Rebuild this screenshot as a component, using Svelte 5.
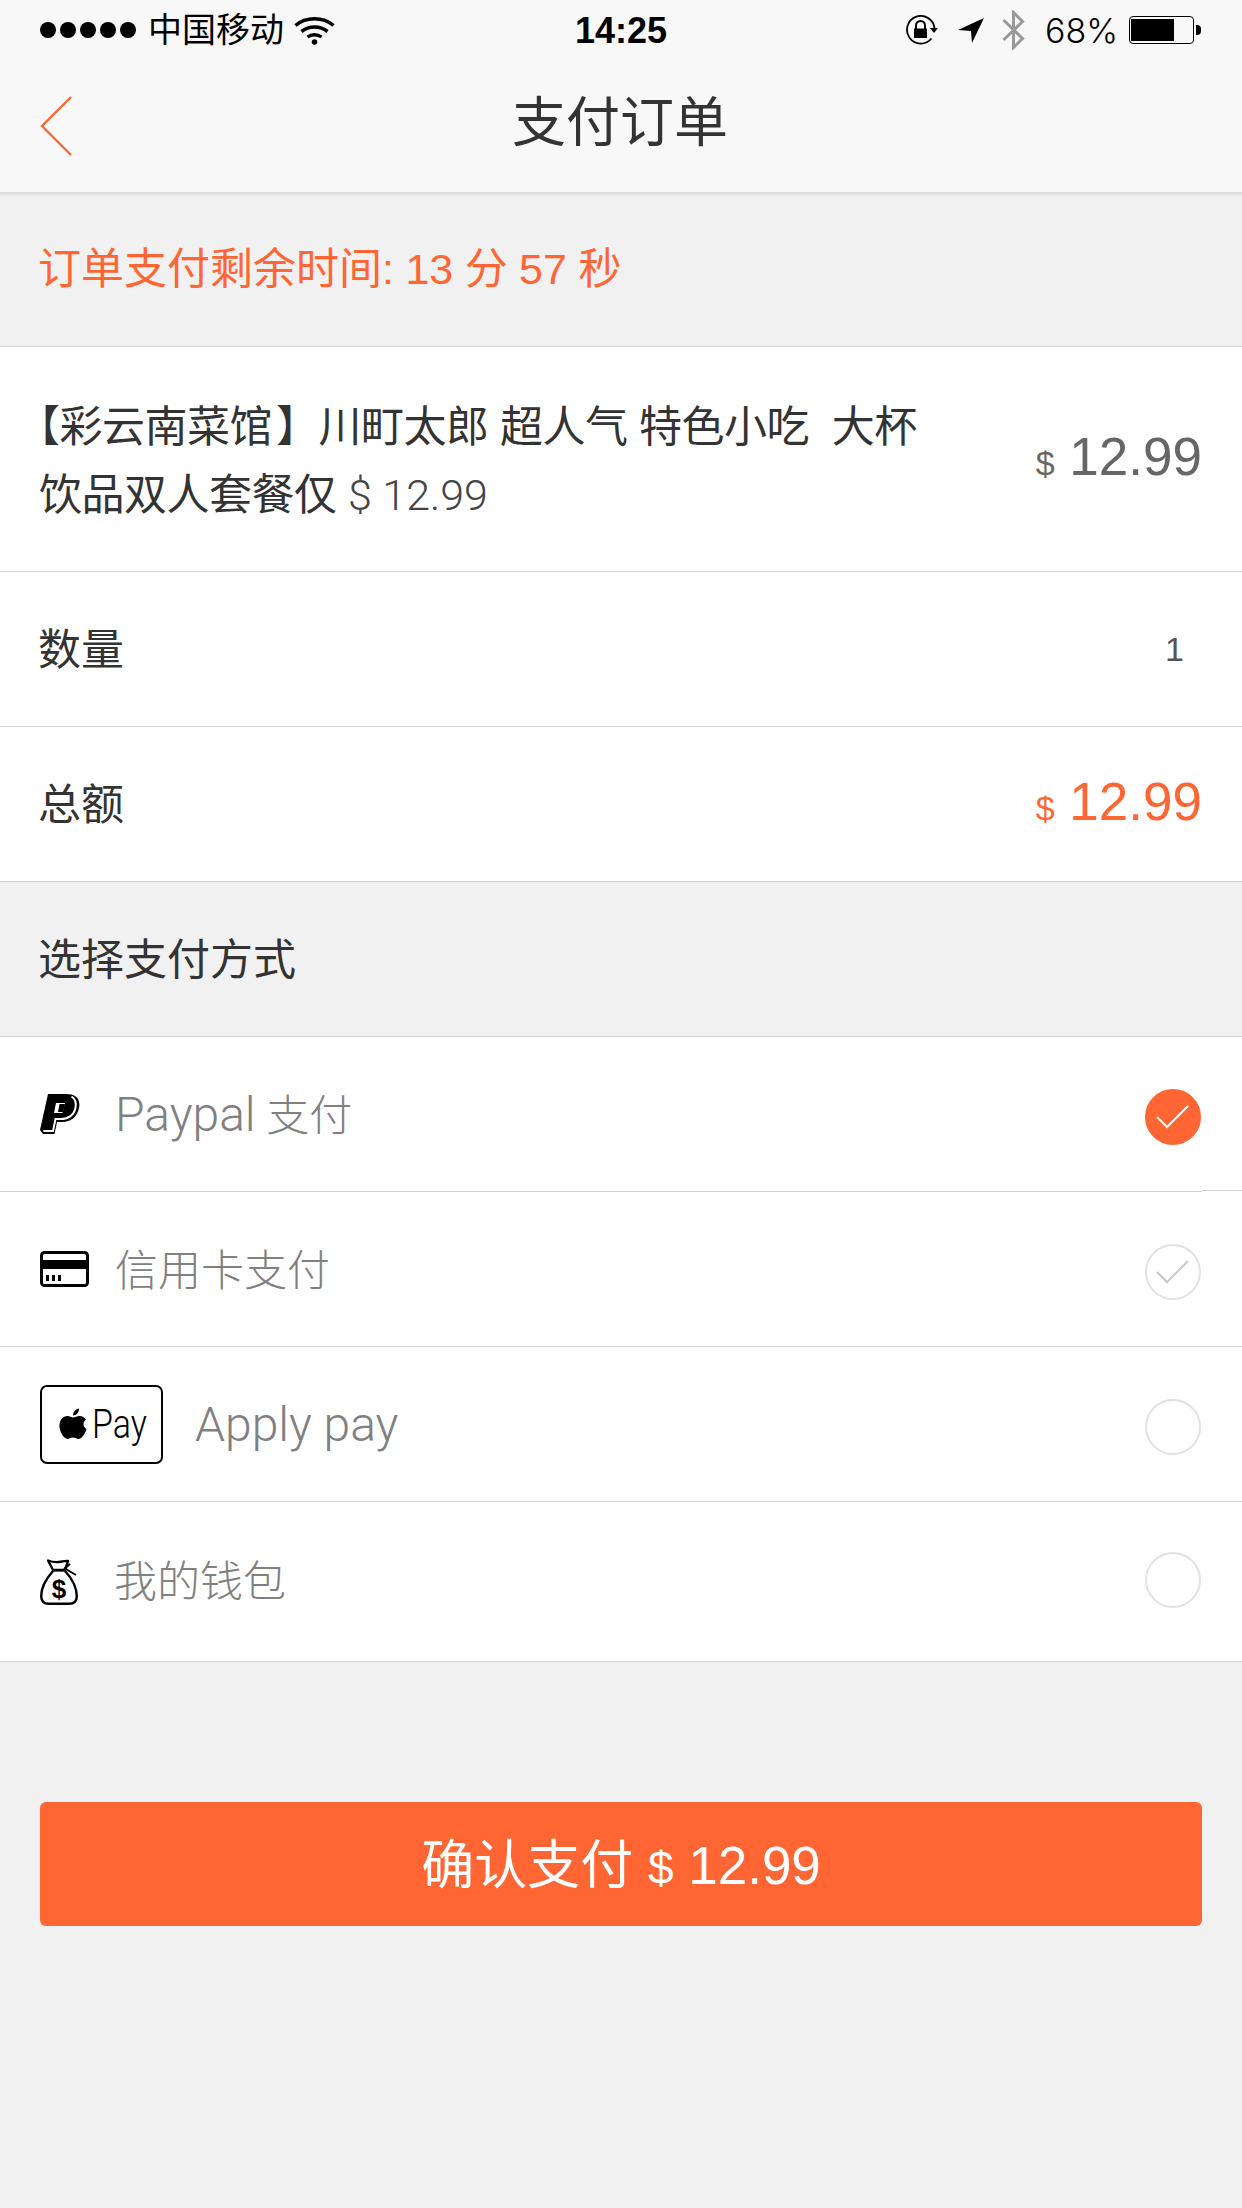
<script>
    const dots = [0, 1, 2, 3, 4];
    const orange = '#ff6633';
</script>

<div class="page">
    <header class="top">
        <div class="status">
            <div class="status-left">
                <div class="dots">
                    {#each dots as d}
                        <span class="dot"></span>
                    {/each}
                </div>
                <span class="carrier">中国移动</span>
                <svg class="wifi" width="41" height="29" viewBox="0 0 41 29">
                    <path d="M1.500 9.500C12 0.500 29 0.500 39.500 9.500" fill="none" stroke="#000" stroke-width="3.6"/>
                    <path d="M7.500 15.500C15 9.500 26 9.500 33.500 15.500" fill="none" stroke="#000" stroke-width="3.6"/>
                    <path d="M13.500 21C17.500 18 23.500 18 27.500 21" fill="none" stroke="#000" stroke-width="3.4"/>
                    <circle cx="20.500" cy="26" r="2.800" fill="#000"/>
                </svg>
            </div>
            <div class="time">14:25</div>
            <div class="status-right">
                <svg width="33" height="30" viewBox="0 0 33 30">
                    <path d="M26.500 23.500A13.800 13.800 0 1 1 29.500 13" fill="none" stroke="#000" stroke-width="1.800"/>
                    <path d="M25 13H33L29 18Z" fill="#000"/>
                    <path d="M11 14V10.500a4.500 4.500 0 0 1 9 0V14" fill="none" stroke="#000" stroke-width="2"/>
                    <rect x="9" y="13.500" width="13" height="9.500" fill="#000"/>
                </svg>
                <svg class="arrow" width="26" height="26" viewBox="0 0 26 26">
                    <path d="M0 13L26 1L14 26L13 14Z" fill="#000"/>
                </svg>
                <svg class="bt" width="23" height="40" viewBox="0 0 23 40">
                    <path d="M1.500 10L20.500 28.500L11.500 37.500V2.500L20.500 11.500L1.500 30" fill="none" stroke="#999" stroke-width="3"/>
                </svg>
                <span class="pct">68%</span>
                <div class="battery"><div class="level"></div></div>
                <span class="nub"></span>
            </div>
        </div>
        <nav class="nav">
            <svg class="back" width="32" height="60" viewBox="0 0 32 60">
                <path d="M31 1L2 30L31 59" fill="none" stroke={orange} stroke-width="2.400"/>
            </svg>
            <h1>支付订单</h1>
        </nav>
    </header>

    <div class="band timer">订单支付剩余时间: 13 分 57 秒</div>

    <section class="item">
        <p class="item-name">【彩云南菜馆<span class="gap"></span>】川町太郎 超人气 特色小吃&nbsp; 大杯<br/><span class="indent">饮品双人套餐仅 <small>$ 12.99</small></span></p>
        <div class="price"><small>$</small> 12.99</div>
    </section>
    <div class="row">
        <span>数量</span>
        <span class="count">1</span>
    </div>
    <div class="row">
        <span>总额</span>
        <div class="price total"><small>$</small> 12.99</div>
    </div>

    <div class="band method-title">选择支付方式</div>

    <div class="pay paypal">
        <div class="pay-left">
            <svg width="40" height="40" viewBox="0 0 40 40">
                <path d="M0 36L8 0H26C35 0 41 4 39 14C37 23 31 28 22 28H17L14.500 40H3Z" fill="#000"/>
                <path d="M31.500 2.500C35.500 5 36.500 9 35.500 14C34 21 28.500 25 21 25H15.500L13 37H3.500" fill="none" stroke="#fff" stroke-width="2"/>
                <path d="M16 9H25L22.500 19H14Z" fill="#fff"/>
                <path d="M19.500 10H25L23 18H18Z" fill="#000"/>
            </svg>
            <span><span class="big">Paypal</span> 支付</span>
        </div>
        <span class="check on">
            <svg width="34" height="24" viewBox="0 0 34 24"><path d="M1 12L11 22L32 1" fill="none" stroke="#fff" stroke-width="2"/></svg>
        </span>
    </div>
    <div class="pay credit">
        <div class="pay-left">
            <svg width="49" height="36" viewBox="0 0 49 36">
                <rect x="1.500" y="1.500" width="46" height="33" rx="3" fill="none" stroke="#000" stroke-width="3"/>
                <rect x="1" y="9" width="47" height="9" fill="#000"/>
                <rect x="6" y="24" width="3" height="6" fill="#000"/>
                <rect x="12" y="24" width="3" height="6" fill="#000"/>
                <rect x="18" y="24" width="3" height="6" fill="#000"/>
            </svg>
            <span>信用卡支付</span>
        </div>
        <span class="check">
            <svg width="34" height="24" viewBox="0 0 34 24"><path d="M1 12L11 22L32 1" fill="none" stroke="#c8c8c8" stroke-width="2"/></svg>
        </span>
    </div>
    <div class="pay">
        <div class="pay-left wide">
            <div class="apple-box">
                <svg width="28" height="34" viewBox="0 0 30 34">
                    <path d="M15 10C17 10 19 8.500 22 8.500C25 8.500 27.500 10 29 12.500C25.500 14.500 25 19.500 29.500 22.500C28 27 24.500 33 21 33C19 33 18 31.500 15 31.500C12 31.500 11 33 9 33C5 33 0.500 25 0.500 19C0.500 12.500 4.500 8.500 9 8.500C11.500 8.500 13.500 10 15 10Z" fill="#000"/>
                    <path d="M15 8C15 4 18 1 21.500 0.500C21.700 4.500 18.500 8 15 8Z" fill="#000"/>
                </svg>
                <span class="apple-pay">Pay</span>
            </div>
            <span class="big">Apply pay</span>
        </div>
        <span class="check"></span>
    </div>
    <div class="pay wallet">
        <div class="pay-left">
            <svg width="38" height="46" viewBox="0 0 38 46">
                <path d="M8 1.500C12 3 15 3.500 19 3C23 2.500 26 1.500 28 2L25 11H13Z" fill="none" stroke="#000" stroke-width="2.400" stroke-linejoin="round"/>
                <path d="M13 12C5 21 1.200 30 1.200 37C1.200 42.500 4 44.800 9 44.800H29C34 44.800 36.800 42.500 36.800 37C36.800 30 33 20 25 12" fill="none" stroke="#000" stroke-width="2.400"/>
                <path d="M12 11.500H26M24 9L36 16M24 10L30 5" fill="none" stroke="#000" stroke-width="2"/>
                <text x="19" y="39" class="bag-dollar">$</text>
            </svg>
            <span>我的钱包</span>
        </div>
        <span class="check"></span>
    </div>

    <div class="footer">
        <button class="confirm">确认支付 <small>$</small> 12.99</button>
    </div>
</div>

<style>
    :global(body) {
        margin: 0;
        background: #f1f1f1;
    }

    .page {
        width: 1242px;
        height: 2208px;
        overflow: hidden;
        background: #f1f1f1;
        font-family: "Liberation Sans", "Noto Sans CJK SC", sans-serif;
        color: #333;
    }

    .top {
        height: 196px;
        background: linear-gradient(#f8f8f8 192px, #d9d9d9 192px, #ececec 196px);
    }

    .status {
        height: 60px;
        display: grid;
        grid-template-columns: 1fr auto 1fr;
        align-items: center;
        padding: 0 40px;
        color: #000;
    }

    .status-left, .status-right {
        display: flex;
        align-items: center;
    }

    .status-right {
        justify-content: flex-end;
        margin-right: 1px;
    }

    .dots {
        display: flex;
        gap: 4px;
        margin-right: 12px;
    }

    .dot {
        width: 16px;
        height: 16px;
        border-radius: 50%;
        background: #000;
    }

    .carrier {
        font-size: 34px;
        line-height: 40px;
        margin-right: 10px;
    }

    .time {
        font-size: 36px;
        font-weight: 700;
        margin-top: 2px;
    }

    .arrow {
        margin-left: 20px;
    }

    .bt {
        margin-left: 18px;
    }

    .pct {
        width: 71px;
        margin-left: 20px;
        font-size: 34px;
        font-family: "Inter", sans-serif;
        font-weight: 300;
        white-space: nowrap;
    }

    .battery {
        width: 65px;
        height: 28px;
        margin-left: 13px;
        box-sizing: border-box;
        border: 1px solid #000;
        border-radius: 4px;
        padding: 2px 1px;
    }

    .level {
        width: 43px;
        height: 100%;
        background: #000;
    }

    .nub {
        width: 5px;
        height: 10px;
        background: #000;
        border-radius: 0 4px 4px 0;
        margin-left: 2px;
    }

    .nav {
        height: 132px;
        position: relative;
        display: flex;
        align-items: center;
        justify-content: center;
    }

    .back {
        position: absolute;
        left: 40px;
        top: 36px;
    }

    h1 {
        margin: -16px 2px 0 0;
        font-size: 54px;
        font-weight: 400;
        color: #333;
    }

    .band {
        height: 155px;
        box-sizing: border-box;
        display: flex;
        align-items: center;
        padding-left: 38px;
        font-size: 43px;
        border-bottom: 1px solid #d2d2d2;
    }

    .timer {
        height: 151px;
        padding-bottom: 12px;
        color: #ff6633;
        word-spacing: -0.5px;
    }

    .method-title {
        padding-bottom: 6px;
        color: #333;
    }

    .item {
        height: 225px;
        box-sizing: border-box;
        background: #fff;
        border-bottom: 1px solid #d2d2d2;
        display: flex;
        align-items: center;
        justify-content: space-between;
        padding: 4px 40px 0 17px;
    }

    .item-name {
        margin: 0;
        font-size: 43px;
        line-height: 68px;
        letter-spacing: -0.5px;
        white-space: nowrap;
    }

    .gap {
        display: inline-block;
        width: 4px;
    }

    .indent {
        padding-left: 22px;
    }

    .item-name small {
        font-family: "Roboto", sans-serif;
        font-size: 43px;
        font-weight: 300;
        letter-spacing: 0;
        color: #444;
    }

    .price {
        font-size: 53px;
        color: #666;
    }

    .item .price {
        margin-top: -10px;
    }

    .price small {
        font-size: 34px;
    }

    .row {
        height: 155px;
        box-sizing: border-box;
        background: #fff;
        border-bottom: 1px solid #d2d2d2;
        display: flex;
        align-items: center;
        justify-content: space-between;
        padding: 0 40px 6px 38px;
        font-size: 43px;
    }

    .count {
        font-size: 34px;
        margin: 6px 18px 0 0;
        color: #555;
    }

    .total {
        color: #ff6633;
    }

    .pay {
        height: 155px;
        box-sizing: border-box;
        background: #fff;
        border-bottom: 1px solid #d2d2d2;
        display: flex;
        align-items: center;
        justify-content: space-between;
        padding: 0 41px 0 40px;
        font-size: 43px;
        color: #808080;
        font-family: "Roboto", "Noto Sans CJK SC", sans-serif;
        font-weight: 300;
    }

    .wallet {
        height: 160px;
    }

    .big {
        font-size: 48px;
    }

    /* the source image has this divider 1px higher past the tick column */
    .paypal {
        position: relative;
    }

    .paypal::after {
        content: "";
        position: absolute;
        left: 1202px;
        right: 0;
        bottom: -1px;
        height: 2px;
        box-sizing: border-box;
        background: #d2d2d2;
        border-bottom: 1px solid #fff;
    }

    .pay-left {
        display: flex;
        align-items: center;
    }

    .pay-left > span {
        margin: -4px 0 0 35px;
    }

    .credit .pay-left > span {
        margin-left: 26px;
    }

    .wallet .pay-left > span {
        margin: -7px 0 0 36px;
    }

    .pay-left.wide > span {
        margin: 0 0 0 32px;
    }

    .apple-box {
        width: 123px;
        height: 79px;
        box-sizing: border-box;
        border: 2px solid #000;
        border-radius: 7px;
        display: flex;
        align-items: center;
        padding-left: 17px;
    }

    .apple-pay {
        display: inline-block;
        margin-left: 5px;
        font-family: "Roboto", sans-serif;
        font-size: 40px;
        font-weight: 300;
        color: #000;
        transform: scaleX(0.85);
        transform-origin: left center;
    }

    .bag-dollar {
        font-family: "Liberation Sans", sans-serif;
        font-size: 26px;
        font-weight: 700;
        text-anchor: middle;
        fill: #000;
    }

    .check {
        width: 56px;
        height: 56px;
        margin-top: 5px;
        box-sizing: border-box;
        border-radius: 50%;
        border: 2px solid #e2e2e2;
        display: flex;
        align-items: center;
        justify-content: center;
    }

    .wallet .check {
        margin-top: -3px;
    }

    .check.on {
        background: #ff6633;
        border-color: #ff6633;
    }

    .footer {
        padding: 140px 40px 0;
    }

    .confirm {
        width: 100%;
        height: 124px;
        border: 0;
        border-radius: 6px;
        background: #ff6633;
        color: #fff;
        font-family: "Liberation Sans", "Noto Sans CJK SC", sans-serif;
        font-size: 53px;
        padding: 0 0 6px;
    }

    .confirm small {
        font-size: 46px;
    }
</style>
